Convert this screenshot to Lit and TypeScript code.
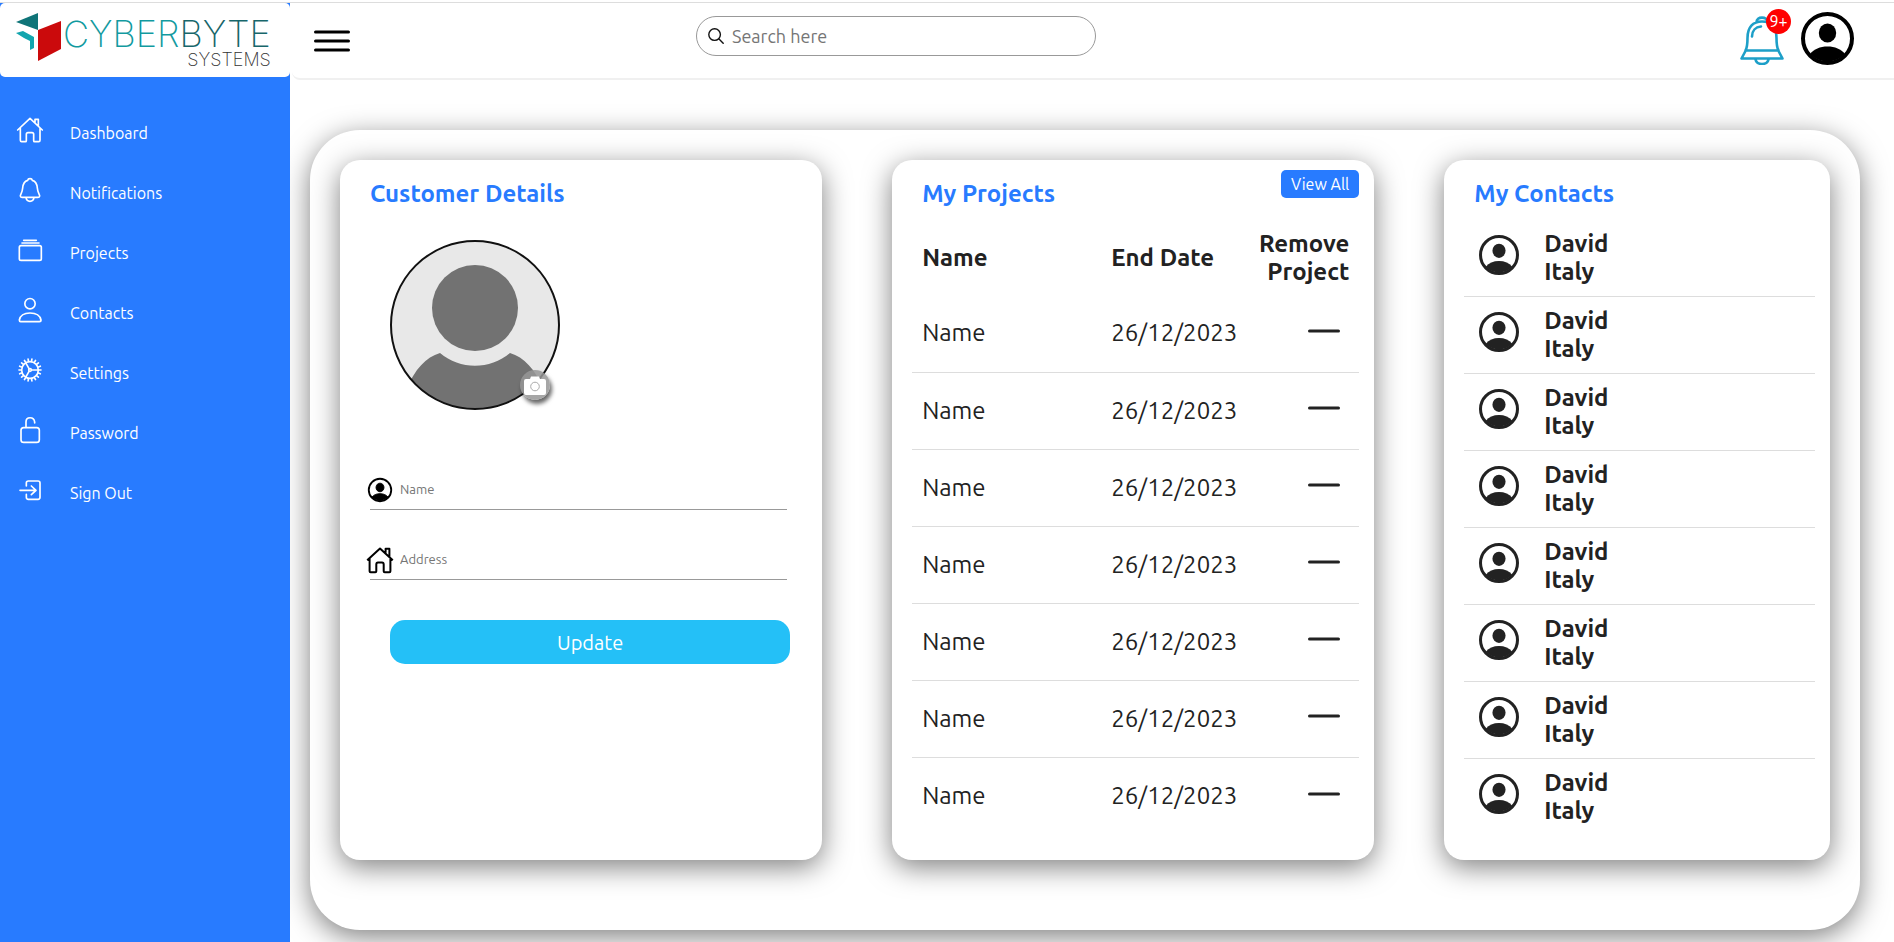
import { LitElement, html, css, svg } from "lit";
import { customElement } from "lit/decorators.js";

const personCircle = svg`
  <circle cx="26.5" cy="26.5" r="24.5" fill="none" stroke="currentColor" stroke-width="4"/>
  <ellipse cx="26.5" cy="21" rx="8.7" ry="9.4" fill="currentColor"/>
  <path d="M9 42C13 37 19 34.5 26.5 34.5S40 37 44 42A24 24 0 0 1 9 42Z" fill="currentColor"/>`;

const house = svg`
  <path d="M1.2 13.2 14 1.5 26.8 13.2M3.6 11.2V24.2Q3.6 25.2 4.6 25.2H9.3Q10.3 25.2 10.3 24.2V17.4Q10.3 15.4 12 15.4H16Q17.7 15.4 17.7 17.4V24.2Q17.7 25.2 18.7 25.2H23.4Q24.4 25.2 24.4 24.2V11.2M19.6 5.8V1.8H23.4V9.6"/>`;

const gearTeeth = Array.from({ length: 18 }, (_, i) => {
  const a = (i * 20 * Math.PI) / 180;
  const x = Math.cos(a);
  const y = Math.sin(a);
  return `M${(90 + 27 * x).toFixed(1)} ${(90 + 27 * y).toFixed(1)}L${(90 + 33 * x).toFixed(1)} ${(90 + 33 * y).toFixed(1)}`;
}).join("");

const navItems = [
  {
    label: "Dashboard",
    icon: svg`<path d="M53 90 90 55 127 90M61 84V121Q61 125 65 125H76Q79 125 79 122V103Q79 98 84 98H96Q101 98 101 103V122Q101 125 104 125H116Q120 125 120 121V84M105 67V58H115V78"/>`,
  },
  {
    label: "Notifications",
    icon: svg`<path d="M90 56Q96 56 97 61C108 64 111 72 112 84C113 98 119 103 119 108Q119 112 114 112H66Q61 112 61 108C61 103 67 98 68 84C69 72 72 64 83 61Q84 56 90 56ZM78 113Q80 124 90 124T102 113"/>`,
  },
  {
    label: "Projects",
    icon: svg`<rect x="58" y="77" width="66" height="44" rx="5"/><path d="M66 69H117M71 61H109"/>`,
  },
  {
    label: "Contacts",
    icon: svg`<circle cx="90" cy="71" r="15.5"/><path d="M62 125Q58 125 58 120C61 106 74 99 90 99S120 106 123 120Q123 125 118 125Z"/>`,
  },
  {
    label: "Settings",
    icon: svg`<circle cx="90" cy="90" r="25"/><path d="${gearTeeth}M95 90H115M87 86 77 68M87 94 77 112"/><circle cx="90" cy="90" r="4"/>`,
  },
  {
    label: "Password",
    icon: svg`<rect x="63" y="83" width="55" height="44" rx="8"/><path d="M78 82V66C78 49 102 49 104 66V69"/>`,
  },
  {
    label: "Sign Out",
    icon: svg`<path d="M79 78V69Q79 63 85 63H114Q120 63 120 69V112Q120 118 114 118H85Q79 118 79 112V103M60 91H107M94 78 108 91 94 104"/>`,
  },
];

const projects = Array.from({ length: 7 }, () => ({ name: "Name", end: "26/12/2023" }));
const contacts = Array.from({ length: 8 }, () => ({ name: "David", country: "Italy" }));

@customElement("app-root")
export class AppRoot extends LitElement {
  static styles = css`
    :host {
      display: block;
      box-sizing: border-box;
      min-height: 100vh;
      padding-top: 2px;
      background: #fff;
      color: #222;
      font-family: Ubuntu, "Noto Sans", sans-serif;
    }
    * { box-sizing: border-box; margin: 0; }
    svg { display: block; flex: none; }
    button, input { font-family: inherit; }
    button { cursor: pointer; border: 0; padding: 0; background: none; color: inherit; }
    .layout {
      display: grid;
      grid-template-columns: 290px minmax(0, 1fr);
      min-height: calc(100vh - 2px);
      border-top: 1px solid #ddd;
    }
    .sidebar { background: #287bff; z-index: 1; }
    .logo {
      display: flex;
      height: 74px;
      padding: 10px 15px 0;
      gap: 2px;
      background: #fff;
      border-radius: 5px;
      text-decoration: none;
      font-family: Inter, sans-serif;
      font-weight: 200;
    }
    .wordmark { display: flex; flex-direction: column; align-items: flex-end; padding-top: 6px; }
    .wordmark-top { font-size: 36px; line-height: 30px; color: #129a9f; }
    .wordmark-dark { color: #17666a; }
    .wordmark-sub { font-size: 18px; line-height: 22px; color: #333; }
    .nav { padding-top: 26px; display: flex; flex-direction: column; }
    .nav-item {
      display: flex;
      align-items: center;
      gap: 26px;
      height: 60px;
      padding-left: 16px;
      color: #fff;
      font-size: 16px;
      text-decoration: none;
    }
    .nav-icon {
      width: 28px;
      height: 28px;
      margin-bottom: 6px;
      fill: none;
      stroke: #fff;
      stroke-width: 5;
      stroke-linecap: round;
      stroke-linejoin: round;
    }
    .topbar {
      display: grid;
      grid-template-columns: 382px minmax(200px, 400px) 1fr;
      height: 77px;
      margin-left: 2px;
      padding: 0 40px 0 22px;
      border-bottom: 2px solid #f0f0f0;
      border-bottom-left-radius: 8px;
    }
    .menu { align-self: center; justify-self: start; }
    .search {
      display: flex;
      align-items: center;
      gap: 8px;
      height: 40px;
      margin-top: 13px;
      padding: 0 11px;
      border: 1px solid #999;
      border-radius: 20px;
    }
    .search-input {
      flex: 1;
      min-width: 0;
      border: 0;
      outline: 0;
      padding: 0;
      background: none;
      font-size: 18px;
    }
    .search-input::placeholder { color: #757575; }
    .user { display: flex; justify-self: end; align-items: flex-start; gap: 17px; padding-top: 9px; color: #000; }
    .bell { position: relative; margin-top: 4px; }
    .badge {
      position: absolute;
      top: -7px;
      right: -7px;
      width: 25px;
      height: 25px;
      border-radius: 50%;
      background: #f00;
      color: #fff;
      font-size: 16px;
      line-height: 25px;
      text-align: center;
    }
    .board {
      display: grid;
      grid-template-columns: 5fr 5fr 4fr;
      gap: 70px;
      margin: 50px 34px 12px 20px;
      padding: 30px 30px 70px;
      border-radius: 50px;
      background: #fff;
      box-shadow: 0 7px 28px rgba(0, 0, 0, 0.5);
    }
    .card {
      min-width: 0;
      padding: 10px 15px 25px 20px;
      border-radius: 20px;
      background: #fff;
      box-shadow: 0 7px 28px rgba(0, 0, 0, 0.5);
    }
    .card-head { display: flex; justify-content: space-between; align-items: flex-start; height: 50px; }
    .title { padding: 10px 10px 0; font-size: 24px; line-height: 28px; font-weight: 700; color: #287bff; }
    .view-all {
      height: 28px;
      padding: 0 10px;
      border-radius: 5px;
      background: #287bff;
      color: #fff;
      font-size: 16px;
    }
    .form { display: flex; flex-direction: column; }
    .photo { position: relative; width: 170px; height: 170px; margin: 20px 0 30px 30px; }
    .camera {
      position: absolute;
      right: 10px;
      bottom: 10px;
      width: 30px;
      height: 30px;
      border-radius: 50%;
      background: rgba(150, 150, 150, 0.85);
      box-shadow: 2px 4px 4px rgba(0, 0, 0, 0.6);
    }
    .field {
      display: flex;
      align-items: center;
      gap: 6px;
      height: 40px;
      margin: 30px 20px 0 10px;
      border-bottom: 1px solid #999;
      color: #000;
    }
    .field-icon { width: 28px; height: 28px; margin-left: -4px; fill: none; stroke: currentColor; stroke-width: 2; stroke-linejoin: round; }
    .field-input { flex: 1; min-width: 0; border: 0; outline: 0; padding: 0 0 2px; background: none; font-size: 13px; }
    .field-input::placeholder { color: #757575; }
    .update {
      height: 44px;
      margin: 40px 17px 0 30px;
      border-radius: 15px;
      background: #24c0f7;
      color: #fff;
      font-size: 20px;
    }
    .table { width: 100%; border-collapse: collapse; table-layout: fixed; font-size: 24px; line-height: 28px; }
    .table th, .table td { height: 77px; padding: 0 10px; text-align: left; white-space: nowrap; }
    .table th { height: 75px; font-weight: 700; }
    .table .last { padding-left: 0; text-align: right; white-space: normal; }
    .col-date { width: 149px; }
    .col-remove { width: 109px; }
    .table tbody tr + tr td { border-top: 1px solid #ddd; }
    .remove { display: inline-block; padding: 0 9px 8px 0; vertical-align: middle; }
    .contacts { list-style: none; padding: 0; }
    .contact {
      display: flex;
      align-items: center;
      gap: 25px;
      height: 77px;
      padding: 0 15px;
      font-size: 24px;
      line-height: 28px;
      font-weight: 700;
    }
    .contact:first-child { height: 76px; }
    .contact + .contact { border-top: 1px solid #ddd; }
    .contact-icon { margin-bottom: 6px; }
  `;

  render() {
    return html`
      <div class="layout">
        <aside class="sidebar">
          <a class="logo" href="#" aria-label="Cyberbyte Systems">
            <svg width="46" height="50" viewBox="0 0 46 50">
              <path d="M1 9 23 0V17Z" fill="#0f7478"/>
              <path d="M1 20 8 18 19 24V35L15 37V28L9 25Z" fill="#12a5ae"/>
              <path d="M23 17 46 8V36L23 48Z" fill="#cb0a0c"/>
            </svg>
            <span class="wordmark">
              <span class="wordmark-top">CYBER<span class="wordmark-dark">BYTE</span></span>
              <span class="wordmark-sub">SYSTEMS</span>
            </span>
          </a>
          <nav class="nav">
            ${navItems.map(
              (item) => html`<a class="nav-item" href="#">
                <svg class="nav-icon" viewBox="48 48 84 84">${item.icon}</svg>
                <span>${item.label}</span>
              </a>`
            )}
          </nav>
        </aside>
        <div>
          <header class="topbar">
            <button class="menu" aria-label="Toggle menu">
              <svg width="36" height="22" viewBox="0 0 36 22" stroke="#000" stroke-width="3" stroke-linecap="round">
                <path d="M1.5 2H34.5M1.5 11H34.5M1.5 20H34.5"/>
              </svg>
            </button>
            <label class="search">
              <svg width="16" height="16" viewBox="0 0 16 16" fill="none" stroke="#111" stroke-width="1.4" stroke-linecap="round">
                <circle cx="6.6" cy="6.6" r="5.8"/><path d="M11 11 15.2 15.2"/>
              </svg>
              <input class="search-input" type="text" aria-label="Search" placeholder="Search here" />
            </label>
            <div class="user">
              <button class="bell" aria-label="Notifications">
                <svg width="44" height="49" viewBox="0 0 44 49" fill="none" stroke="#1d9fc8" stroke-width="2.6" stroke-linecap="round" stroke-linejoin="round">
                  <path d="M16.5 6.5C16 0 28 0 27.5 6.5M5.5 34.5C7.5 31 7.5 28 7.5 22C7.5 11 13 5.5 22 5.5S36.5 11 36.5 22C36.5 28 36.5 31 38.5 34.5ZM5.5 35 1.5 42.5H42.5L38.5 35M15.5 43.5C17 49.5 27 49.5 28.5 43.5M12 20.5C12 15 15.5 11 21 10.5"/>
                </svg>
                <span class="badge">9+</span>
              </button>
              <button aria-label="Account">
                <svg width="53" height="53" viewBox="0 0 53 53">${personCircle}</svg>
              </button>
            </div>
          </header>
          <main class="board">
            <section class="card">
              <div class="card-head"><h2 class="title">Customer Details</h2></div>
              <form class="form" @submit=${(e: Event) => e.preventDefault()}>
                <div class="photo">
                  <svg width="170" height="170" viewBox="0 0 170 170">
                    <clipPath id="face"><circle cx="85" cy="85" r="84"/></clipPath>
                    <g clip-path="url(#face)">
                      <rect width="170" height="170" fill="#e8e8e8"/>
                      <circle cx="85" cy="68" r="43" fill="#727272"/>
                      <path d="M16 150C25 129 36 117 50 113C70 130 100 130 120 113C134 117 145 129 154 150V170H16Z" fill="#727272"/>
                    </g>
                    <circle cx="85" cy="85" r="84" fill="none" stroke="#111" stroke-width="2"/>
                  </svg>
                  <button class="camera" type="button" aria-label="Change photo">
                    <svg width="30" height="30" viewBox="0 0 30 30">
                      <path d="M6 9H10L11 6.5H19L20 9H24Q26 9 26 11V23Q26 25 24 25H6Q4 25 4 23V11Q4 9 6 9Z" fill="#fff"/>
                      <circle cx="15" cy="16.5" r="4.3" fill="none" stroke="#aaa" stroke-width="1"/>
                    </svg>
                  </button>
                </div>
                <label class="field">
                  <svg class="field-icon" viewBox="-4 -4 61 61">${personCircle}</svg>
                  <input class="field-input" type="text" aria-label="Name" placeholder="Name" />
                </label>
                <label class="field">
                  <svg class="field-icon" viewBox="0 -1 28 28">${house}</svg>
                  <input class="field-input" type="text" aria-label="Address" placeholder="Address" />
                </label>
                <button class="update" type="submit">Update</button>
              </form>
            </section>
            <section class="card">
              <div class="card-head">
                <h2 class="title">My Projects</h2>
                <button class="view-all">View All</button>
              </div>
              <table class="table">
                <colgroup><col /><col class="col-date" /><col class="col-remove" /></colgroup>
                <thead>
                  <tr><th>Name</th><th>End Date</th><th class="last">Remove Project</th></tr>
                </thead>
                <tbody>
                  ${projects.map(
                    (p) => html`<tr>
                      <td>${p.name}</td>
                      <td>${p.end}</td>
                      <td class="last">
                        <button class="remove" aria-label="Remove project">
                          <svg width="32" height="4" viewBox="0 0 32 4"><path d="M1.5 2H30.5" stroke="#222" stroke-width="3" stroke-linecap="round"/></svg>
                        </button>
                      </td>
                    </tr>`
                  )}
                </tbody>
              </table>
            </section>
            <section class="card">
              <div class="card-head"><h2 class="title">My Contacts</h2></div>
              <ul class="contacts">
                ${contacts.map(
                  (c) => html`<li class="contact">
                    <svg class="contact-icon" width="40" height="40" viewBox="0 0 53 53">${personCircle}</svg>
                    <div><div>${c.name}</div><div>${c.country}</div></div>
                  </li>`
                )}
              </ul>
            </section>
          </main>
        </div>
      </div>
    `;
  }
}
